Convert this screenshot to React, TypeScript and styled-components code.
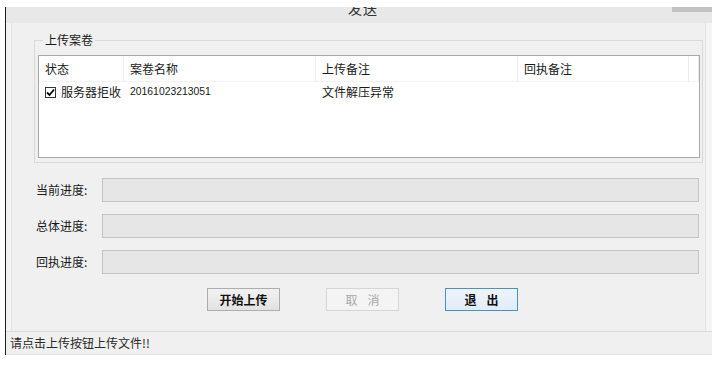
import React, { FC } from 'react';
import styled, { createGlobalStyle } from 'styled-components';

const GlobalStyle = createGlobalStyle`
  html, body {
    margin: 0;
    padding: 0;
    background: #ffffff;
  }
  body {
    font-family: "Noto Sans CJK SC", "Liberation Sans", sans-serif;
    font-size: 12px;
    color: #1a1a1a;
  }
`;

const Screen = styled.div`
  width: 712px;
  height: 365px;
  padding: 7px 0 0 5px;
  box-sizing: border-box;
  background: #ffffff;
  overflow: hidden;
`;

const Window = styled.div`
  height: 348px;
  border-left: 1px solid #1c1c1c;
  background: #f4f4f4;
  display: flex;
  flex-direction: column;
`;

const TitleBar = styled.div`
  position: relative;
  height: 16px;
  background: #e8e8e8;
  overflow: hidden;
  flex: none;
`;

const TitleText = styled.div`
  margin: -6px 0 0 342px;
  font-size: 14px;
  line-height: 14px;
  color: #333;
  letter-spacing: 1px;
`;

const TitleButton = styled.div`
  position: absolute;
  right: 0;
  top: 0;
  width: 40px;
  height: 5px;
  background: #c2c2c2;
`;

const Body = styled.div`
  flex: 1;
  margin: 0 6px 0 5px;
  border-left: 1px solid #e4e4e4;
  border-right: 1px solid #e4e4e4;
  background: #f0f0f0;
  display: flex;
  flex-direction: column;
  padding-top: 11px;
`;

const GroupBox = styled.fieldset`
  margin: 0 2px 0 22px;
  padding: 9px 2px 4px 3px;
  border: 1px solid #d9d9d9;
  min-width: 0;
`;

const Legend = styled.legend`
  padding: 0 2px;
  margin-left: 5px;
  line-height: 12px;
  font-size: 12px;
  color: #1a1a1a;
`;

const ListBox = styled.div`
  height: 103px;
  box-sizing: border-box;
  border: 1px solid #a9a9a9;
  background: #ffffff;
  display: flex;
  flex-direction: column;
`;

const cols = '85px 192px 202px 171px 1fr';

const HeaderRow = styled.div`
  display: grid;
  grid-template-columns: ${cols};
  height: 26px;
  border-bottom: 1px solid #f2f2f2;
  box-sizing: border-box;
`;

const HeaderCell = styled.div`
  padding-left: 6px;
  display: flex;
  align-items: center;
  border-right: 1px solid #ececec;
  line-height: 12px;
`;

const DataRow = styled.div`
  display: grid;
  grid-template-columns: ${cols};
  height: 20px;
`;

const Cell = styled.div<{ $mono?: boolean }>`
  padding-left: 6px;
  display: flex;
  align-items: center;
  gap: 5px;
  white-space: nowrap;
  line-height: 12px;
  font-family: ${(p) =>
    p.$mono ? '"Liberation Sans", sans-serif' : 'inherit'};
  font-size: ${(p) => (p.$mono ? '10.4px' : '12px')};
`;

const CheckBox = styled.span`
  width: 11px;
  height: 11px;
  box-sizing: border-box;
  border: 1px solid #333;
  background: #fff;
  display: inline-flex;
  align-items: center;
  justify-content: center;
  flex: none;
`;

const ProgressList = styled.div`
  margin-top: 15px;
  display: flex;
  flex-direction: column;
  gap: 12px;
`;

const ProgressRow = styled.div`
  display: grid;
  grid-template-columns: 82px 1fr;
  column-gap: 8px;
  margin-right: 6px;
  align-items: center;
`;

const ProgressLabel = styled.div`
  padding-left: 24px;
  line-height: 12px;
  color: #1a1a1a;
  white-space: nowrap;
`;

const ProgressBar = styled.div`
  height: 24px;
  box-sizing: border-box;
  border: 1px solid #c4c4c4;
  background: #e6e6e6;
`;

const ButtonRow = styled.div`
  margin-top: 14px;
  padding-left: 195px;
  display: flex;
  gap: 46px;
`;

const Button = styled.button<{ $focused?: boolean }>`
  width: 73px;
  height: 23px;
  box-sizing: border-box;
  padding: 0;
  font-family: inherit;
  font-size: 12px;
  font-weight: 600;
  color: #111;
  border: 1px solid ${(p) => (p.$focused ? '#4a8fcf' : '#adadad')};
  background: ${(p) =>
    p.$focused
      ? 'linear-gradient(#eef5fb, #e1ecf7)'
      : 'linear-gradient(#f2f2f2, #e2e2e2)'};
  letter-spacing: ${(p) => (p.$focused ? '10px' : '0')};
  text-indent: ${(p) => (p.$focused ? '10px' : '0')};

  &:disabled {
    color: #a8a8a8;
    font-weight: 400;
    border-color: #d6d6d6;
    background: #f4f4f4;
    letter-spacing: 10px;
    text-indent: 10px;
  }
`;

const StatusBar = styled.div`
  flex: none;
  height: 24px;
  box-sizing: border-box;
  border-top: 1px solid #dcdcdc;
  border-bottom: 1px solid #e0e0e0;
  background: #f0f0f0;
  padding-left: 4px;
  display: flex;
  align-items: center;
  color: #2a2a2a;
  line-height: 12px;
`;

const Check: FC = () => (
  <svg width="9" height="9" viewBox="0 0 9 9">
    <polyline
      points="1,4.5 3.5,7 8,1.5"
      fill="none"
      stroke="#000"
      strokeWidth="1.8"
    />
  </svg>
);

const progress = ['当前进度:', '总体进度:', '回执进度:'];

const App: FC = () => (
  <>
    <GlobalStyle />
    <Screen>
      <Window>
        <TitleBar>
          <TitleText>发送</TitleText>
          <TitleButton />
        </TitleBar>
        <Body>
          <GroupBox>
            <Legend>上传案卷</Legend>
            <ListBox>
              <HeaderRow>
                <HeaderCell>状态</HeaderCell>
                <HeaderCell>案卷名称</HeaderCell>
                <HeaderCell>上传备注</HeaderCell>
                <HeaderCell>回执备注</HeaderCell>
                <HeaderCell />
              </HeaderRow>
              <DataRow>
                <Cell>
                  <CheckBox>
                    <Check />
                  </CheckBox>
                  服务器拒收
                </Cell>
                <Cell $mono>20161023213051</Cell>
                <Cell>文件解压异常</Cell>
                <Cell />
                <Cell />
              </DataRow>
            </ListBox>
          </GroupBox>
          <ProgressList>
            {progress.map((label) => (
              <ProgressRow key={label}>
                <ProgressLabel>{label}</ProgressLabel>
                <ProgressBar />
              </ProgressRow>
            ))}
          </ProgressList>
          <ButtonRow>
            <Button>开始上传</Button>
            <Button disabled>取消</Button>
            <Button $focused>退出</Button>
          </ButtonRow>
        </Body>
        <StatusBar>请点击上传按钮上传文件!!</StatusBar>
      </Window>
    </Screen>
  </>
);

export default App;
